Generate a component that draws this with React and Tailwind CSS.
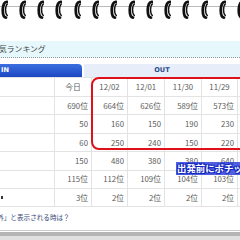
import React from "react";

const dates = ["今日", "12/02", "12/01", "11/30", "11/29", ""];

const rows = [
  ["690位", "664位", "626位", "589位", "573位", ""],
  ["50", "160", "150", "190", "230", ""],
  ["60", "250", "240", "150", "220", ""],
  ["150", "480", "380", "380", "640", ""],
  ["115位", "112位", "109位", "104位", "103位", ""],
  ["3位", "2位", "2位", "2位", "2位", ""],
];

function Ring() {
  return (
    <svg width="7" height="19" viewBox="0 0 7 19" className="shrink-0">
      <path d="M6 1.8 C0.8 1.2 0.4 17 5 17.6" stroke="#111" strokeWidth="2.8" fill="none" strokeLinecap="round" />
      <path d="M6.3 4 C4 6 4 13.5 6.3 15.5" stroke="#111" strokeWidth="1.4" fill="none" strokeLinecap="round" />
    </svg>
  );
}

export default function App() {
  return (
    <div
      className="relative w-[240px] h-[240px] overflow-hidden bg-white text-[#5c5c5c] flex flex-col"
      style={{ fontFamily: '"Noto Sans CJK JP", "Noto Sans", sans-serif' }}
    >
      {/* spiral binding */}
      <div className="relative h-[20px] shrink-0">
        <div className="absolute left-0 right-0 top-[6px] h-px bg-[#bbb]" />
        <div className="relative ml-[1px] w-[243px] flex justify-between">
          {Array.from({ length: 14 }).map((_, i) => (
            <Ring key={i} />
          ))}
        </div>
      </div>

      <div className="h-[21px] shrink-0" />

      {/* title band */}
      <div className="h-[17px] shrink-0 bg-[#e6f8fc] border-b border-dotted border-[#999] flex items-center text-[7.8px] text-[#444] leading-none -ml-[1px]">
        気ランキング
      </div>

      <div className="h-[6px] shrink-0" />

      {/* tabs */}
      <div className="flex h-[13px] shrink-0 gap-[2px]" style={{ fontFamily: '"DejaVu Sans", sans-serif' }}>
        <div className="w-[82px] bg-gradient-to-b from-[#3b6fe0] to-[#1d47c2] rounded-tr-[4px] text-white text-[6.6px] font-bold leading-[13px] pl-[1px]">
          IN
        </div>
        <div className="flex-1 bg-[#e8eef9] text-[#2a4a8a] text-[6.6px] font-bold leading-[13px] text-center">
          OUT
        </div>
      </div>

      {/* table */}
      <div className="grid grid-cols-[55px_37px_36px_37px_37px_36px_30px] border-t border-[#e3e3e3] text-[7.8px] shrink-0">
        <div className="h-[19px] border-r border-b border-[#e3e3e3]" />
        {dates.map((d, i) => (
          <div key={i} className="h-[19px] border-r border-b border-[#e3e3e3] flex items-center justify-center">
            {d}
          </div>
        ))}
        {rows.map((r, ri) => (
          <React.Fragment key={ri}>
            <div className="h-[18.4px] border-r border-b border-[#e3e3e3] flex items-center">
              {ri === 5 && <span className="ml-[1px] w-[2px] h-[3px] bg-[#333]" />}
            </div>
            {r.map((c, ci) => (
              <div key={ci} className="h-[18.4px] border-r border-b border-[#e3e3e3] flex items-center justify-end pr-[3px]">
                {c}
              </div>
            ))}
          </React.Fragment>
        ))}
      </div>

      <div className="mt-[5px] text-[6.6px] text-[#3a4a7a] leading-[10px] -ml-[16px] whitespace-nowrap shrink-0">
        「圏外」と表示される時は？
      </div>

      {/* bottom bar */}
      <div className="mt-auto shrink-0 border-t border-[#ccc] pt-[1px]">
        <div className="h-[4px] bg-[#b5b5b5]" />
        <div className="h-[4px] bg-[#e0e0e0]" />
      </div>

      {/* red highlight */}
      <div className="absolute left-[91px] top-[77px] w-[170px] h-[73px] border-2 border-[#e0101a] rounded-[8px]" />

      {/* label */}
      <div
        className="absolute left-[176px] top-[162px] text-[9.4px] font-bold text-white leading-[13px] whitespace-nowrap bg-[#2438d8]/80 pl-[1px]"
        style={{ textShadow: "0 0 2px #1428c0, 1px 1px 0 #1428c0, -1px -1px 0 #1428c0, 1px -1px 0 #1428c0, -1px 1px 0 #1428c0" }}
      >
        出発前にポチッ
      </div>
    </div>
  );
}
